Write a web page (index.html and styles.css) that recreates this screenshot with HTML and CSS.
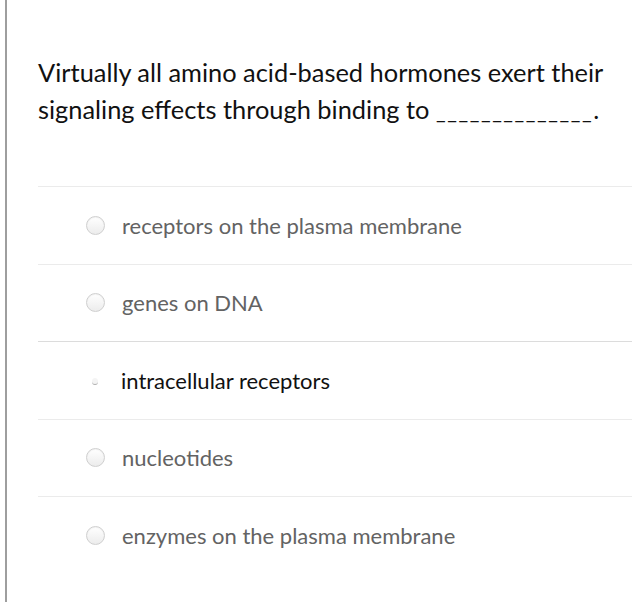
FILE: index.html
```html
<!DOCTYPE html>
<html lang="en">
<head>
<meta charset="utf-8">
<link rel="stylesheet" href="styles.css">
</head>
<body>
<div class="page">
  <p class="question">Virtually all amino acid-based hormones exert their signaling effects through binding <span class="tail">to <span class="blank">______________</span>.</span></p>
  <ul class="options">
    <li class="option"><span class="radio"></span><span class="label">receptors on the plasma membrane</span></li>
    <li class="option"><span class="radio"></span><span class="label">genes on DNA</span></li>
    <li class="option option-selected"><span class="radio radio-selected"></span><span class="label">intracellular receptors</span></li>
    <li class="option"><span class="radio"></span><span class="label">nucleotides</span></li>
    <li class="option"><span class="radio"></span><span class="label">enzymes on the plasma membrane</span></li>
  </ul>
</div>
</body>
</html>
```
FILE: styles.css
```css
html, body {
  margin: 0;
  padding: 0;
  background: #fff;
}
.page {
  margin-left: 5px;
  border-left: 2px solid #9e9e9e;
  min-height: 602px;
  box-sizing: border-box;
  padding: 54px 4px 0 31px;
  font-family: Lato, "Open Sans", sans-serif;
}
.question {
  margin: 0 0 58px 0;
  font-size: 25.4px;
  line-height: 37px;
  color: #111;
  width: 594px;
}
.tail {
  white-space: nowrap;
}
.blank {
  font-size: 21px;
  line-height: 1;
  letter-spacing: 1.6px;
}
.options {
  list-style: none;
  margin: 0;
  padding: 0;
}
.option {
  display: flex;
  align-items: center;
  border-top: 1px solid #ebebeb;
  height: 76.5px;
  padding-left: 48px;
}
.option:nth-child(3) {
  border-top-color: #dcdcdc;
}
.radio {
  width: 17px;
  height: 17px;
  border-radius: 50%;
  border: 1px solid #cfcfcf;
  background: linear-gradient(#ffffff, #ececec);
  box-shadow: inset 0 1px 1px rgba(0,0,0,0.05);
  flex: none;
  margin-right: 17px;
}
.radio-selected {
  width: 6px;
  height: 6px;
  border: none;
  border-bottom: 1px solid #b0b0b0;
  background: #f4f4f4;
  margin-left: 6px;
  margin-right: 23px;
  margin-top: 2px;
  box-shadow: none;
}
.label {
  font-size: 22px;
  color: #636363;
}
.option-selected .label {
  color: #111;
}
```
